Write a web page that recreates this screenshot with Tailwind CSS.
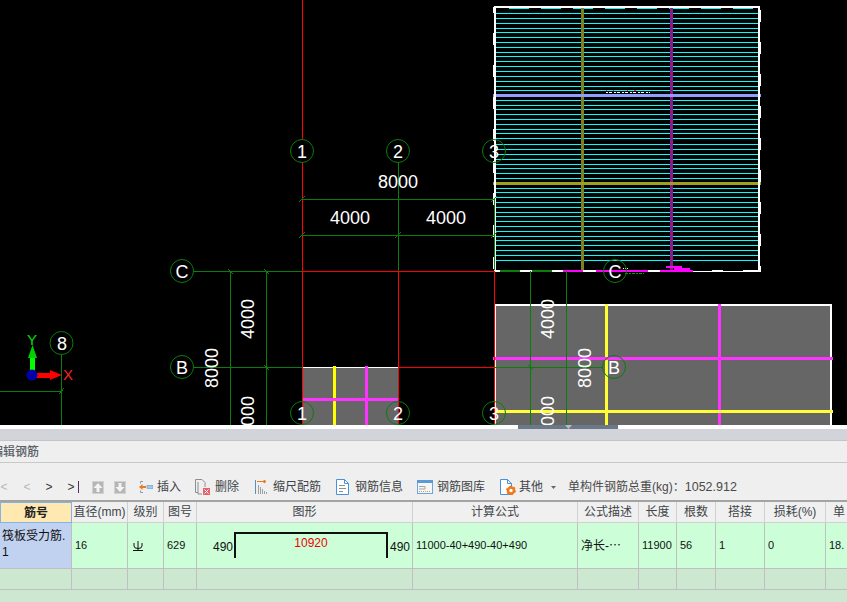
<!DOCTYPE html>
<html lang="zh-CN">
<head>
<meta charset="UTF-8">
<title>编辑钢筋</title>
<script src="https://cdn.jsdelivr.net/npm/@tailwindcss/browser@4"></script>
</head>
<body class="w-[847px] h-[602px] overflow-hidden bg-[#cde8d0] font-['Liberation_Sans','Noto_Sans_CJK_SC',sans-serif]">

<!-- CAD canvas -->
<svg class="block w-[847px] h-[425px] bg-black" viewBox="0 0 847 425" shape-rendering="crispEdges">
  <!-- top slab -->
  <path stroke="#00ffff" fill="none" d="M496 13.5H758M496 18.5H758M496 23.5H758M496 28.5H758M496 32.5H758M496 37.5H758M496 42.5H758M496 47.5H758M496 52.5H758M496 56.5H758M496 61.5H758M496 66.5H758M496 71.5H758M496 76.5H758M496 81.5H758M496 86.5H758M496 90.5H758M496 100.5H758M496 105.5H758M496 109.5H758M496 114.5H758M496 119.5H758M496 124.5H758M496 129.5H758M496 133.5H758M496 138.5H758M496 144.5H758M496 149.5H758M496 154.5H758M496 159.5H758M496 164.5H758M496 168.5H758M496 173.5H758M496 178.5H758M496 188.5H758M496 192.5H758M496 197.5H758M496 202.5H758M496 207.5H758M496 212.5H758M496 216.5H758M496 221.5H758M496 226.5H758M496 231.5H758M496 236.5H758M496 240.5H758M496 245.5H758M496 250.5H758M496 255.5H758M496 260.5H758"/>
  <path stroke="#00ffff" fill="none" d="M509 8.5H529M541 8.5H561M573 8.5H593M605 8.5H625M637 8.5H657M669 8.5H689M701 8.5H721M733 8.5H753"/>
  <rect x="581" y="8" width="3" height="263" fill="#808020"/>
  <rect x="670" y="8" width="3" height="263" fill="#8b1a8b"/>
  <rect x="493" y="94" width="268" height="3" fill="#8f9fff"/>
  <rect x="493" y="182" width="268" height="3" fill="#a0a020"/>
  <path stroke="#fff" stroke-width="2" fill="none" d="M494 7H760M495 7V271M759 7V271"/>
  <path stroke="#fff" stroke-width="3" fill="none" d="M494.5 7V13M494.5 33V45M494.5 65V77M494.5 97V109M494.5 129V141M494.5 161V173M494.5 193V205M494.5 225V237M494.5 257V269M759.5 10V22M759.5 42V54M759.5 74V86M759.5 106V118M759.5 138V150M759.5 170V182M759.5 202V214M759.5 234V246M759.5 266V272"/>
  <path stroke="#fff" stroke-width="2" fill="none" d="M494 271H760"/>
  <path stroke="#0a7d0a" stroke-width="2" fill="none" d="M500 271H520M532 271H552"/>
  <path stroke="#ff00ff" stroke-width="2" fill="none" d="M563 271H583M596 271H648M660 271H693M666 267H682M674 269H690"/>
  <path stroke="#000" stroke-width="1" fill="none" d="M693 270.5H712M723 270.5H743"/>
  <path stroke="#fff" stroke-dasharray="2 1 3 2" fill="none" d="M606 92.5H650"/>
  <path stroke="#ff2020" fill="none" d="M606 90.5H607M613 90.5H614M627 90.5H628M634 90.5H636"/>
  <path stroke="#0a9d0a" stroke-dasharray="3 1 2 1" fill="none" d="M625 273.5H644"/>
  <path stroke="#fff" stroke-dasharray="1 1" fill="none" d="M623 268.5H628"/>

  <!-- slabs below -->
  <rect x="302" y="367" width="96" height="60" fill="#666" stroke="#fff"/>
  <rect x="495" y="305" width="336" height="122" fill="#666" stroke="#fff" stroke-width="2"/>
  <rect x="333" y="366" width="3" height="59" fill="#ffff00"/>
  <rect x="365" y="366" width="3" height="59" fill="#ff33ff"/>
  <rect x="302" y="398" width="96" height="3" fill="#ff33ff"/>
  <rect x="605" y="304" width="3" height="121" fill="#ffff33"/>
  <rect x="718" y="304" width="3" height="121" fill="#ff33ff"/>
  <rect x="493" y="357" width="340" height="3" fill="#ff33ff"/>
  <rect x="494" y="410" width="339" height="3" fill="#ffff33"/>

  <!-- axis lines -->
  <path stroke="#ff0000" fill="none" d="M302.5 0V367M398.5 271V367M398.5 367V425M494.5 271V425M302 271.5H494M398 367.5H494M302.5 367V425"/>
  <path stroke="#0a7d0a" fill="none" d="M398.5 163V271M193 271.5H302M193 367.5H302M494 367.5H603M302 199.5H494M302 235.5H494M230.5 271V425M266.5 271V425M530.5 271V425M566.5 271V425M61.5 355V425M0 391.5H61M494.5 199V270"/>
  <path stroke="#0a7d0a" fill="none" d="M299 202L305 196M491 202L497 196M299 238L305 232M395 238L401 232M491 238L497 232M228 269L233 274M264 269L269 274M264 365L269 370M528 365L533 370M59 394L64 388"/>

  <!-- axis bubbles -->
  <g fill="#000" stroke="#0a7d0a" shape-rendering="auto">
    <circle cx="302" cy="151" r="11.5"/><circle cx="398" cy="151" r="11.5"/>
    <circle cx="182" cy="271" r="11.5"/><circle cx="182" cy="367" r="11.5"/>
    <circle cx="61.5" cy="343" r="11.5"/>
  </g>
  <g fill="none" stroke="#0a7d0a" shape-rendering="auto">
    <circle cx="494" cy="151" r="11.5"/><circle cx="615" cy="271" r="11.5"/><circle cx="614" cy="367" r="11.5"/>
    <circle cx="302" cy="413" r="11.5"/><circle cx="398" cy="413" r="11.5"/><circle cx="494" cy="413" r="11.5"/>
  </g>

  <!-- labels -->
  <g fill="#fff" font-size="18" text-anchor="middle" shape-rendering="auto">
    <text x="302" y="158">1</text><text x="398" y="158">2</text><text x="494" y="158">3</text>
    <text x="182" y="278">C</text><text x="615" y="278">C</text><text x="182" y="374">B</text><text x="614" y="374">B</text>
    <text x="62" y="350">8</text>
    <text x="302" y="420">1</text><text x="398" y="420">2</text><text x="494" y="420">3</text>
    <text x="398" y="188">8000</text><text x="350" y="224">4000</text><text x="446" y="224">4000</text>
    <text transform="translate(254 319) rotate(-90)">4000</text>
    <text transform="translate(218 368) rotate(-90)">8000</text>
    <text transform="translate(254 416) rotate(-90)">4000</text>
    <text transform="translate(554 319) rotate(-90)">4000</text>
    <text transform="translate(591 368) rotate(-90)">8000</text>
    <text transform="translate(554 416) rotate(-90)">4000</text>
  </g>

  <!-- ucs marker -->
  <g shape-rendering="auto">
    <rect x="30" y="354" width="5" height="21" fill="#00ff00"/>
    <path fill="#00d000" d="M32.500 345L37 358H28Z"/>
    <rect x="32" y="373" width="20" height="5" fill="#ff0000"/>
    <path fill="#ff0000" d="M62 375L50 370V380Z"/>
    <circle cx="32" cy="375" r="5.500" fill="#0000a8"/>
    <text x="32" y="345" font-size="15" text-anchor="middle" fill="#00e000">Y</text>
    <text x="68" y="380" font-size="15" text-anchor="middle" fill="#ff2020">X</text>
  </g>
</svg>

<!-- splitter -->
<div class="h-1 bg-white">
  <div class="ml-[518px] w-[100px] h-1 bg-[#6a7888] flex justify-center items-start">
    <svg class="w-[7px] h-[4px]" viewBox="0 0 7 4"><path fill="#b8bcc0" d="M0 0H7L3.500 4Z"/></svg>
  </div>
</div>
<div class="h-3 bg-[#d3d4d9] border-b border-[#c4c5c9]"></div>

<!-- panel title -->
<div class="h-[22px] bg-[#efefef] border-b border-[#c8c8c8] overflow-hidden flex items-center">
  <span class="ml-[-9px] text-[12px] font-medium text-[#5a6068] whitespace-nowrap">编辑钢筋</span>
</div>

<!-- toolbar -->
<div class="h-[39px] pt-[11px] bg-[#efefef] border-b-2 border-[#a3a3a3] flex items-center text-[12px] text-[#404448] whitespace-nowrap">
  <span class="w-2 text-center text-[#b8b8b8]">&lt;</span>
  <span class="ml-[15px] w-2 text-center text-[#b8b8b8]">&lt;</span>
  <span class="ml-[14px] w-2 text-center text-[#333]">&gt;</span>
  <span class="ml-[14px] w-2 text-center text-[#333]">&gt;</span>
  <span class="ml-[3px] w-px h-3 bg-[#5a2a5a]"></span>

  <svg class="ml-[13px] w-3 h-[13px]" viewBox="0 0 12 13"><rect width="12" height="13" fill="#b5b5b5"/><rect x=".5" y=".5" width="11" height="12" fill="none" stroke="#d2d2d2"/><path fill="#f4f4f4" d="M6 2L10.500 7H7.500V11H4.500V7H1.500Z"/></svg>
  <svg class="ml-[10px] w-3 h-[13px]" viewBox="0 0 12 13"><rect width="12" height="13" fill="#b5b5b5"/><rect x=".5" y=".5" width="11" height="12" fill="none" stroke="#d2d2d2"/><path fill="#f4f4f4" d="M6 11L10.500 6H7.500V2H4.500V6H1.500Z"/></svg>

  <svg class="ml-[13px] w-[14px] h-[14px]" viewBox="0 0 14 14"><path fill="none" stroke="#8a9aa8" d="M4 1.500H1.500V3.500M4 12.500H1.500V10.500"/><path fill="#ee7a1a" d="M0 7L3.500 4V6H7V8H3.500V10Z"/><rect x="8" y="5.500" width="6" height="3" fill="#a8c8e8" stroke="#5b9bd5" stroke-width=".6"/></svg>
  <span class="ml-[4px]">插入</span>

  <svg class="ml-[14px] w-[15px] h-4" viewBox="0 0 15 16"><path fill="none" stroke="#8a8f96" d="M.500 .500H7L10 3.500V8M.500 .500V13.500H3M3 3V15H7"/><rect x="8" y="9" width="7" height="7" fill="#e8606a"/><path stroke="#fff" d="M9.500 10.500L13.500 14.500M13.500 10.500L9.500 14.500"/></svg>
  <span class="ml-[5px]">删除</span>

  <svg class="ml-[16px] w-[13px] h-[14px]" viewBox="0 0 13 14"><path stroke="#ee7a1a" fill="#ee7a1a" d="M2 1.500H10M9 0V3L11 1.500Z"/><path stroke="#5b8fc0" d="M.500 0V14"/><path stroke="#9aa0a6" d="M3.500 5V14M5.500 7V14M7.500 9V14M9.500 11V14M11.500 12V14"/></svg>
  <span class="ml-[5px]">缩尺配筋</span>

  <svg class="ml-[15px] w-[13px] h-4" viewBox="0 0 13 16"><path fill="#fff" stroke="#4a90d9" d="M.500 .500H8.500L12.500 4.500V15.500H.500Z"/><path fill="none" stroke="#4a90d9" d="M8.500 .500V4.500H12.500"/><path stroke="#8a8f96" d="M3 6.500H9M3 9.500H10M3 12.500H7"/></svg>
  <span class="ml-[6px]">钢筋信息</span>

  <svg class="ml-[14px] w-4 h-[14px]" viewBox="0 0 16 14"><rect x=".5" y=".5" width="15" height="13" fill="#f6f6f6" stroke="#6aa5de"/><rect width="16" height="3" fill="#5b9bd5"/><path fill="none" stroke="#a0a4a8" d="M2 6.500H8V9H2"/><path stroke="#c8a050" stroke-dasharray="1 1" d="M2 11.500H14"/></svg>
  <span class="ml-[4px]">钢筋图库</span>

  <svg class="ml-[15px] w-4 h-4" viewBox="0 0 16 16"><path fill="#fff" stroke="#4a90d9" d="M.500 .500H7.500L11.500 4.500V15.500H.500Z"/><path fill="none" stroke="#4a90d9" d="M7.500 .500V4.500H11.500"/><circle cx="11" cy="11.500" r="3" fill="#fff" stroke="#ee7a1a" stroke-width="2.500"/><circle cx="11" cy="11.500" r="4.200" fill="none" stroke="#ee7a1a" stroke-width="1.500" stroke-dasharray="2 2.400"/></svg>
  <span class="ml-[3px]">其他</span>
  <svg class="ml-2 w-[5px] h-[3px]" viewBox="0 0 5 3"><path fill="#666" d="M0 0H5L2.500 3Z"/></svg>
  <span class="ml-[12px] text-[#4a4a4a]">单构件钢筋总重(kg)：<span class="text-[12.5px]">1052.912</span></span>
</div>

<!-- rebar table -->
<div class="grid grid-cols-[72px_56px_36px_33px_216px_165px_61px_38px_39px_49px_61px_21px] grid-rows-[21px_46px_21px] text-[12px] text-[#404448] overflow-hidden">
  <!-- header -->
  <div class="bg-[#ffe9b0] border border-[#7fb5e8] font-bold text-[#222] flex items-center justify-center">筋号</div>
  <div class="bg-[#f0f0f0] border-r border-b border-[#d0d0d0] flex items-center justify-center whitespace-nowrap">直径(mm)</div>
  <div class="bg-[#f0f0f0] border-r border-b border-[#d0d0d0] flex items-center justify-center">级别</div>
  <div class="bg-[#f0f0f0] border-r border-b border-[#d0d0d0] flex items-center justify-center">图号</div>
  <div class="bg-[#f0f0f0] border-r border-b border-[#d0d0d0] flex items-center justify-center">图形</div>
  <div class="bg-[#f0f0f0] border-r border-b border-[#d0d0d0] flex items-center justify-center">计算公式</div>
  <div class="bg-[#f0f0f0] border-r border-b border-[#d0d0d0] flex items-center justify-center">公式描述</div>
  <div class="bg-[#f0f0f0] border-r border-b border-[#d0d0d0] flex items-center justify-center">长度</div>
  <div class="bg-[#f0f0f0] border-r border-b border-[#d0d0d0] flex items-center justify-center">根数</div>
  <div class="bg-[#f0f0f0] border-r border-b border-[#d0d0d0] flex items-center justify-center">搭接</div>
  <div class="bg-[#f0f0f0] border-r border-b border-[#d0d0d0] flex items-center justify-center whitespace-nowrap">损耗(%)</div>
  <div class="bg-[#f0f0f0] border-b border-[#d0d0d0] flex items-center pl-[7px]">单</div>

  <!-- data row -->
  <div class="bg-[#c0d2f0] border-r border-b border-[#c0c0c0] pl-[2px] pt-[5px] text-[#111] leading-[16px] whitespace-nowrap">筏板受力筋.<br>1</div>
  <div class="bg-[#ccffd8] border-r border-b border-[#c0c0c0] flex items-center pl-[3px] text-[#111] text-[11px]">16</div>
  <div class="bg-[#ccffd8] border-r border-b border-[#c0c0c0] flex items-center pl-[5px] text-[#111]">
    <svg class="w-[10px] h-[10px]" viewBox="0 0 10 10"><path fill="none" stroke="#111" d="M1 2V5Q1 7.500 5 7.500Q9 7.500 9 5V2M5 0V9.500M0 9.500H10"/></svg>
  </div>
  <div class="bg-[#ccffd8] border-r border-b border-[#c0c0c0] flex items-center pl-[3px] text-[#111] text-[11px]">629</div>
  <div class="bg-[#ccffd8] border-r border-b border-[#c0c0c0] flex items-center pl-[16px] text-[#111] text-[12px]">
    <span class="w-[21px] mt-[2px]">490</span>
    <div class="w-[154px] h-[26px] border-t-2 border-x-2 border-[#111] text-center text-[#f00000] leading-[18px] mb-[2px]">10920</div>
    <span class="ml-[2px] mt-[2px]">490</span>
  </div>
  <div class="bg-[#ccffd8] border-r border-b border-[#c0c0c0] flex items-center pl-[3px] text-[#111] text-[11px] whitespace-nowrap">11000-40+490-40+490</div>
  <div class="bg-[#ccffd8] border-r border-b border-[#c0c0c0] flex items-center pl-[3px] text-[#111] whitespace-nowrap">净长-⋯</div>
  <div class="bg-[#ccffd8] border-r border-b border-[#c0c0c0] flex items-center pl-[3px] text-[#111] text-[11px]">11900</div>
  <div class="bg-[#ccffd8] border-r border-b border-[#c0c0c0] flex items-center pl-[3px] text-[#111] text-[11px]">56</div>
  <div class="bg-[#ccffd8] border-r border-b border-[#c0c0c0] flex items-center pl-[3px] text-[#111] text-[11px]">1</div>
  <div class="bg-[#ccffd8] border-r border-b border-[#c0c0c0] flex items-center pl-[3px] text-[#111] text-[11px]">0</div>
  <div class="bg-[#ccffd8] border-b border-[#c0c0c0] flex items-center pl-[3px] text-[#111] text-[11px]">18.</div>

  <!-- empty row -->
  <div class="bg-[#cde8d0] border-r border-b border-[#c0c0c0]"></div>
  <div class="bg-[#cde8d0] border-r border-b border-[#c0c0c0]"></div>
  <div class="bg-[#cde8d0] border-r border-b border-[#c0c0c0]"></div>
  <div class="bg-[#cde8d0] border-r border-b border-[#c0c0c0]"></div>
  <div class="bg-[#cde8d0] border-r border-b border-[#c0c0c0]"></div>
  <div class="bg-[#cde8d0] border-r border-b border-[#c0c0c0]"></div>
  <div class="bg-[#cde8d0] border-r border-b border-[#c0c0c0]"></div>
  <div class="bg-[#cde8d0] border-r border-b border-[#c0c0c0]"></div>
  <div class="bg-[#cde8d0] border-r border-b border-[#c0c0c0]"></div>
  <div class="bg-[#cde8d0] border-r border-b border-[#c0c0c0]"></div>
  <div class="bg-[#cde8d0] border-r border-b border-[#c0c0c0]"></div>
  <div class="bg-[#cde8d0] border-b border-[#c0c0c0]"></div>
</div>
</body>
</html>
